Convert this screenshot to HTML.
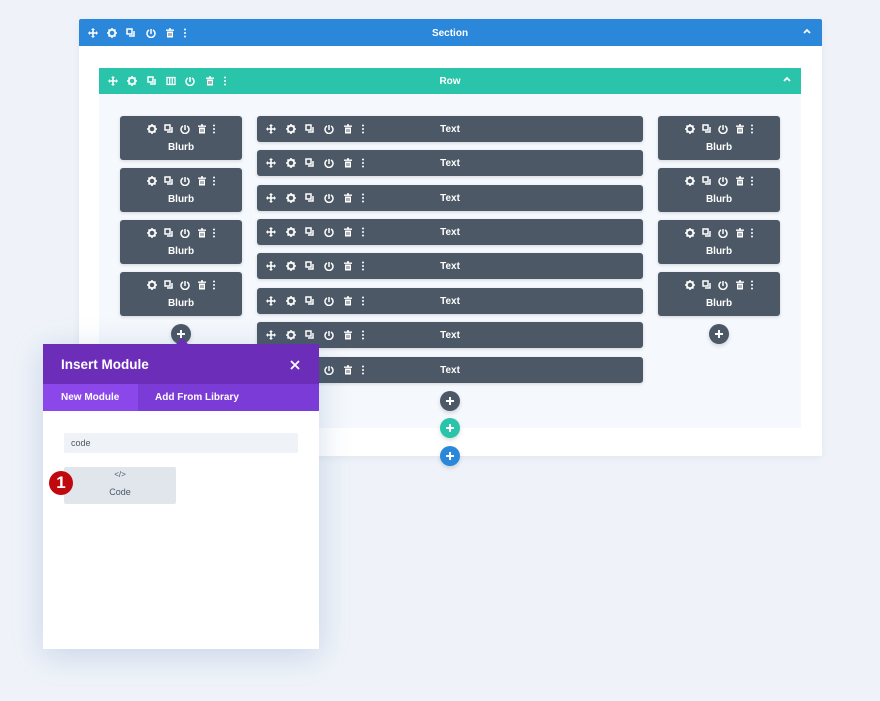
<!DOCTYPE html>
<html><head><meta charset="utf-8"><style>
*{margin:0;padding:0;box-sizing:border-box}
body{width:880px;height:701px;background:#eff3f9;font-family:"Liberation Sans",sans-serif;position:relative;overflow:hidden}
.a{position:absolute}
.sec{left:79px;top:19px;width:743px;height:437px;background:#fff;box-shadow:0 2px 8px rgba(0,40,100,.06)}
.sh{left:79px;top:19px;width:743px;height:27px;background:#2b87da;border-radius:2px 2px 0 0}
.row{left:99px;top:68px;width:702px;height:360px;background:#f5f8fc}
.rh{left:99px;top:68px;width:702px;height:26px;background:#29c4a9}
.t{color:#fff;font-size:10px;font-weight:bold;text-align:center;margin-top:2px;line-height:12px}
.m{background:#4c5866;border-radius:3px;box-shadow:0 1px 3px rgba(0,0,0,.15)}
.b{width:122px;height:44px}
.x{left:257px;width:386px;height:26px}
svg.i{position:absolute;width:10px;height:10px}
.c{width:20px;height:20px;border-radius:50%;box-shadow:0 2px 4px rgba(0,0,0,.15)}
.c::before,.c::after{content:"";position:absolute;background:#fff;left:6px;top:9.2px;width:8px;height:1.6px}
.c::after{left:9.2px;top:6px;width:1.6px;height:8px}
</style></head><body>
<svg width="0" height="0" style="position:absolute">
<defs>
<symbol id="mv" viewBox="0 0 10 10"><path d="M5 0L7 2H5.8V4.2H8V3L10 5L8 7V5.8H5.8V8H7L5 10L3 8H4.2V5.8H2V7L0 5L2 3V4.2H4.2V2H3Z" fill="#fff"/></symbol>
<symbol id="gr" viewBox="0 0 10 10"><circle cx="5" cy="5" r="3.2" fill="none" stroke="#fff" stroke-width="1.8"/><path d="M5 0V2M5 8V10M0 5H2M8 5H10M1.5 1.5L3 3M7 7L8.5 8.5M8.5 1.5L7 3M3 7L1.5 8.5" stroke="#fff" stroke-width="1.6"/></symbol>
<symbol id="dp" viewBox="0 0 10 10"><path d="M1 1H6V6H1Z" fill="none" stroke="#fff" stroke-width="1.5"/><path d="M8 3V8H3" fill="none" stroke="#fff" stroke-width="1.5"/></symbol>
<symbol id="pw" viewBox="0 0 10 10"><path d="M3 2A4 4 0 1 0 7 2" fill="none" stroke="#fff" stroke-width="1.5"/><path d="M5 1V6" stroke="#fff" stroke-width="1.5"/></symbol>
<symbol id="tr" viewBox="0 0 10 10"><path d="M1 2.2H9M4 1H6" stroke="#fff" stroke-width="1.4"/><path d="M2 3.5H8V9.5H2Z" fill="#fff"/><path d="M4 5V8M6 5V8" stroke="#4c5866" stroke-width=".9"/></symbol>
<symbol id="dt" viewBox="0 0 10 10"><circle cx="5" cy="1.5" r="1" fill="#fff"/><circle cx="5" cy="5" r="1" fill="#fff"/><circle cx="5" cy="8.5" r="1" fill="#fff"/></symbol>
<symbol id="cl" viewBox="0 0 10 10"><path d="M1 1.5H9V8.5H1ZM3.7 1.5V8.5M6.3 1.5V8.5" fill="none" stroke="#fff" stroke-width="1.3"/></symbol>
<symbol id="up" viewBox="0 0 10 10"><path d="M2 7L5 4L8 7" fill="none" stroke="#fff" stroke-width="1.8"/></symbol>
</defs></svg>

<div class="a sec"></div>
<div class="a sh"></div>
<svg class="i" style="left:88px;top:28px"><use href="#mv"/></svg>
<svg class="i" style="left:107px;top:28px"><use href="#gr"/></svg>
<svg class="i" style="left:126px;top:28px"><use href="#dp"/></svg>
<svg class="i" style="left:146px;top:28px"><use href="#pw"/></svg>
<svg class="i" style="left:165px;top:28px"><use href="#tr"/></svg>
<svg class="i" style="left:180px;top:28px"><use href="#dt"/></svg>
<div class="a t" style="left:400px;top:26px;width:100px">Section</div>
<svg class="i" style="left:802px;top:26px"><use href="#up"/></svg>

<div class="a row"></div>
<div class="a rh"></div>
<svg class="i" style="left:108px;top:76px"><use href="#mv"/></svg>
<svg class="i" style="left:127px;top:76px"><use href="#gr"/></svg>
<svg class="i" style="left:147px;top:76px"><use href="#dp"/></svg>
<svg class="i" style="left:166px;top:76px"><use href="#cl"/></svg>
<svg class="i" style="left:185px;top:76px"><use href="#pw"/></svg>
<svg class="i" style="left:205px;top:76px"><use href="#tr"/></svg>
<svg class="i" style="left:220px;top:76px"><use href="#dt"/></svg>
<div class="a t" style="left:400px;top:74px;width:100px">Row</div>
<svg class="i" style="left:782px;top:74px"><use href="#up"/></svg>

<div class="a m b" style="left:120px;top:116px"></div>
<div class="a m b" style="left:120px;top:168px"></div>
<div class="a m b" style="left:120px;top:220px"></div>
<div class="a m b" style="left:120px;top:272px"></div>
<div class="a m b" style="left:658px;top:116px"></div>
<div class="a m b" style="left:658px;top:168px"></div>
<div class="a m b" style="left:658px;top:220px"></div>
<div class="a m b" style="left:658px;top:272px"></div>

<div class="a t" style="left:120px;top:140px;width:122px">Blurb</div>
<div class="a t" style="left:120px;top:192px;width:122px">Blurb</div>
<div class="a t" style="left:120px;top:244px;width:122px">Blurb</div>
<div class="a t" style="left:120px;top:296px;width:122px">Blurb</div>
<div class="a t" style="left:658px;top:140px;width:122px">Blurb</div>
<div class="a t" style="left:658px;top:192px;width:122px">Blurb</div>
<div class="a t" style="left:658px;top:244px;width:122px">Blurb</div>
<div class="a t" style="left:658px;top:296px;width:122px">Blurb</div>

<div class="a" style="left:0;top:0">
<svg class="i" style="left:147px;top:124px"><use href="#gr"/></svg><svg class="i" style="left:164px;top:124px"><use href="#dp"/></svg><svg class="i" style="left:180px;top:124px"><use href="#pw"/></svg><svg class="i" style="left:197px;top:124px"><use href="#tr"/></svg><svg class="i" style="left:209px;top:124px"><use href="#dt"/></svg>
<svg class="i" style="left:147px;top:176px"><use href="#gr"/></svg><svg class="i" style="left:164px;top:176px"><use href="#dp"/></svg><svg class="i" style="left:180px;top:176px"><use href="#pw"/></svg><svg class="i" style="left:197px;top:176px"><use href="#tr"/></svg><svg class="i" style="left:209px;top:176px"><use href="#dt"/></svg>
<svg class="i" style="left:147px;top:228px"><use href="#gr"/></svg><svg class="i" style="left:164px;top:228px"><use href="#dp"/></svg><svg class="i" style="left:180px;top:228px"><use href="#pw"/></svg><svg class="i" style="left:197px;top:228px"><use href="#tr"/></svg><svg class="i" style="left:209px;top:228px"><use href="#dt"/></svg>
<svg class="i" style="left:147px;top:280px"><use href="#gr"/></svg><svg class="i" style="left:164px;top:280px"><use href="#dp"/></svg><svg class="i" style="left:180px;top:280px"><use href="#pw"/></svg><svg class="i" style="left:197px;top:280px"><use href="#tr"/></svg><svg class="i" style="left:209px;top:280px"><use href="#dt"/></svg>
<svg class="i" style="left:685px;top:124px"><use href="#gr"/></svg><svg class="i" style="left:702px;top:124px"><use href="#dp"/></svg><svg class="i" style="left:718px;top:124px"><use href="#pw"/></svg><svg class="i" style="left:735px;top:124px"><use href="#tr"/></svg><svg class="i" style="left:747px;top:124px"><use href="#dt"/></svg>
<svg class="i" style="left:685px;top:176px"><use href="#gr"/></svg><svg class="i" style="left:702px;top:176px"><use href="#dp"/></svg><svg class="i" style="left:718px;top:176px"><use href="#pw"/></svg><svg class="i" style="left:735px;top:176px"><use href="#tr"/></svg><svg class="i" style="left:747px;top:176px"><use href="#dt"/></svg>
<svg class="i" style="left:685px;top:228px"><use href="#gr"/></svg><svg class="i" style="left:702px;top:228px"><use href="#dp"/></svg><svg class="i" style="left:718px;top:228px"><use href="#pw"/></svg><svg class="i" style="left:735px;top:228px"><use href="#tr"/></svg><svg class="i" style="left:747px;top:228px"><use href="#dt"/></svg>
<svg class="i" style="left:685px;top:280px"><use href="#gr"/></svg><svg class="i" style="left:702px;top:280px"><use href="#dp"/></svg><svg class="i" style="left:718px;top:280px"><use href="#pw"/></svg><svg class="i" style="left:735px;top:280px"><use href="#tr"/></svg><svg class="i" style="left:747px;top:280px"><use href="#dt"/></svg>
</div>

<div class="a m x" style="top:116px"></div>
<div class="a m x" style="top:150px"></div>
<div class="a m x" style="top:185px"></div>
<div class="a m x" style="top:219px"></div>
<div class="a m x" style="top:253px"></div>
<div class="a m x" style="top:288px"></div>
<div class="a m x" style="top:322px"></div>
<div class="a m x" style="top:357px"></div>
<div class="a t" style="left:400px;top:122px;width:100px">Text</div>
<div class="a t" style="left:400px;top:156px;width:100px">Text</div>
<div class="a t" style="left:400px;top:191px;width:100px">Text</div>
<div class="a t" style="left:400px;top:225px;width:100px">Text</div>
<div class="a t" style="left:400px;top:259px;width:100px">Text</div>
<div class="a t" style="left:400px;top:294px;width:100px">Text</div>
<div class="a t" style="left:400px;top:328px;width:100px">Text</div>
<div class="a t" style="left:400px;top:363px;width:100px">Text</div>

<div class="a" style="left:0;top:0">
<svg class="i" style="left:266px;top:124px"><use href="#mv"/></svg><svg class="i" style="left:286px;top:124px"><use href="#gr"/></svg><svg class="i" style="left:305px;top:124px"><use href="#dp"/></svg><svg class="i" style="left:324px;top:124px"><use href="#pw"/></svg><svg class="i" style="left:343px;top:124px"><use href="#tr"/></svg><svg class="i" style="left:358px;top:124px"><use href="#dt"/></svg>
<svg class="i" style="left:266px;top:158px"><use href="#mv"/></svg><svg class="i" style="left:286px;top:158px"><use href="#gr"/></svg><svg class="i" style="left:305px;top:158px"><use href="#dp"/></svg><svg class="i" style="left:324px;top:158px"><use href="#pw"/></svg><svg class="i" style="left:343px;top:158px"><use href="#tr"/></svg><svg class="i" style="left:358px;top:158px"><use href="#dt"/></svg>
<svg class="i" style="left:266px;top:193px"><use href="#mv"/></svg><svg class="i" style="left:286px;top:193px"><use href="#gr"/></svg><svg class="i" style="left:305px;top:193px"><use href="#dp"/></svg><svg class="i" style="left:324px;top:193px"><use href="#pw"/></svg><svg class="i" style="left:343px;top:193px"><use href="#tr"/></svg><svg class="i" style="left:358px;top:193px"><use href="#dt"/></svg>
<svg class="i" style="left:266px;top:227px"><use href="#mv"/></svg><svg class="i" style="left:286px;top:227px"><use href="#gr"/></svg><svg class="i" style="left:305px;top:227px"><use href="#dp"/></svg><svg class="i" style="left:324px;top:227px"><use href="#pw"/></svg><svg class="i" style="left:343px;top:227px"><use href="#tr"/></svg><svg class="i" style="left:358px;top:227px"><use href="#dt"/></svg>
<svg class="i" style="left:266px;top:261px"><use href="#mv"/></svg><svg class="i" style="left:286px;top:261px"><use href="#gr"/></svg><svg class="i" style="left:305px;top:261px"><use href="#dp"/></svg><svg class="i" style="left:324px;top:261px"><use href="#pw"/></svg><svg class="i" style="left:343px;top:261px"><use href="#tr"/></svg><svg class="i" style="left:358px;top:261px"><use href="#dt"/></svg>
<svg class="i" style="left:266px;top:296px"><use href="#mv"/></svg><svg class="i" style="left:286px;top:296px"><use href="#gr"/></svg><svg class="i" style="left:305px;top:296px"><use href="#dp"/></svg><svg class="i" style="left:324px;top:296px"><use href="#pw"/></svg><svg class="i" style="left:343px;top:296px"><use href="#tr"/></svg><svg class="i" style="left:358px;top:296px"><use href="#dt"/></svg>
<svg class="i" style="left:266px;top:330px"><use href="#mv"/></svg><svg class="i" style="left:286px;top:330px"><use href="#gr"/></svg><svg class="i" style="left:305px;top:330px"><use href="#dp"/></svg><svg class="i" style="left:324px;top:330px"><use href="#pw"/></svg><svg class="i" style="left:343px;top:330px"><use href="#tr"/></svg><svg class="i" style="left:358px;top:330px"><use href="#dt"/></svg>
<svg class="i" style="left:324px;top:365px"><use href="#pw"/></svg><svg class="i" style="left:343px;top:365px"><use href="#tr"/></svg><svg class="i" style="left:358px;top:365px"><use href="#dt"/></svg>
</div>

<div class="a c" style="left:171px;top:324px;background:#4c5866"></div>
<div class="a c" style="left:709px;top:324px;background:#4c5866"></div>
<div class="a c" style="left:440px;top:391px;background:#4c5866"></div>
<div class="a c" style="left:440px;top:418px;background:#29c4a9"></div>
<div class="a c" style="left:440px;top:446px;background:#2b87da"></div>

<div class="a" style="left:43px;top:344px;width:276px;height:305px;background:#fff;box-shadow:0 6px 30px rgba(40,90,160,.2)"></div>
<div class="a" style="left:175px;top:338px;width:0;height:0;border-left:7px solid transparent;border-right:7px solid transparent;border-bottom:7px solid #6c2eb9"></div>
<div class="a" style="left:43px;top:344px;width:276px;height:40px;background:#6c2eb9"></div>
<div class="a" style="left:61px;top:357px;color:#fff;font-size:13.5px;font-weight:bold">Insert Module</div>
<svg class="a" style="left:290px;top:360px" width="10" height="10" viewBox="0 0 10 10"><path d="M1 1L9 9M9 1L1 9" stroke="#fff" stroke-width="1.8"/></svg>
<div class="a" style="left:43px;top:384px;width:276px;height:27px;background:#7b3bd6"></div>
<div class="a" style="left:43px;top:384px;width:95px;height:27px;background:#8b47ea"></div>
<div class="a" style="left:61px;top:392px;color:#fff;font-size:10px;font-weight:bold">New Module</div>
<div class="a" style="left:155px;top:392px;color:#fff;font-size:10px;font-weight:bold">Add From Library</div>
<div class="a" style="left:64px;top:433px;width:234px;height:20px;background:#eff2f6;border-radius:2px"></div>
<div class="a" style="left:71px;top:438px;color:#4c5866;font-size:9px">code</div>
<div class="a" style="left:64px;top:467px;width:112px;height:37px;background:#e1e6ed;border-radius:2px"></div>
<div class="a" style="left:64px;top:470px;width:112px;text-align:center;color:#4c5866;font-size:8px">&lt;/&gt;</div>
<div class="a" style="left:64px;top:487px;width:112px;text-align:center;color:#4c5866;font-size:9px">Code</div>
<div class="a" style="left:49px;top:471px;width:24px;height:24px;border-radius:50%;background:#c1080e;color:#fff;font-size:17px;line-height:24px;text-align:center;font-weight:bold">1</div>
</body></html>
